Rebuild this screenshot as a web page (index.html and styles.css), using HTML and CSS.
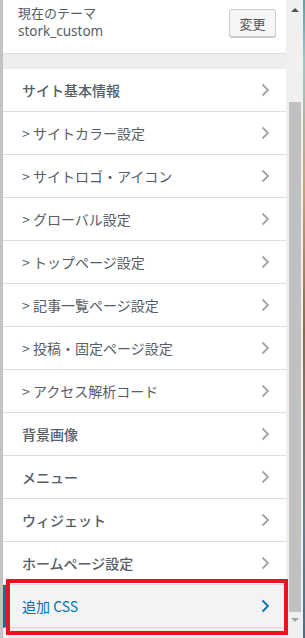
FILE: index.html
```html
<!DOCTYPE html>
<html lang="ja">
<head>
    <meta charset="UTF-8">
    <meta name="viewport" content="width=device-width, initial-scale=1.0">
    <title>カスタマイズ</title>
    <link rel="stylesheet" href="styles.css">
</head>
<body>
    <div class="frame">
        <div class="edge"></div>

        <div class="panel">
            <div class="theme-info">
                <div class="theme-text">
                    <span class="theme-label">現在のテーマ</span>
                    <span class="theme-name">stork_custom</span>
                </div>
                <button class="change-btn">変更</button>
            </div>

            <ul class="sections">
                <li class="section main">サイト基本情報</li>
                <li class="section">&gt; サイトカラー設定</li>
                <li class="section">&gt; サイトロゴ・アイコン</li>
                <li class="section">&gt; グローバル設定</li>
                <li class="section">&gt; トップページ設定</li>
                <li class="section">&gt; 記事一覧ページ設定</li>
                <li class="section">&gt; 投稿・固定ページ設定</li>
                <li class="section">&gt; アクセス解析コード</li>
                <li class="section main">背景画像</li>
                <li class="section main">メニュー</li>
                <li class="section main">ウィジェット</li>
                <li class="section main">ホームページ設定</li>
                <li class="section main active">追加 CSS</li>
            </ul>
        </div>

        <div class="scrollbar">
            <span class="arrow up"></span>
            <div class="thumb"></div>
            <span class="arrow down"></span>
        </div>

        <div class="backdrop"></div>

        <!-- highlight box around the last section -->
        <div class="highlight"></div>
    </div>

    <script>
        // add the chevron to every section row
        document.querySelectorAll(".section").forEach(function (row) {
            const chevron = document.createElementNS("http://www.w3.org/2000/svg", "svg");
            chevron.setAttribute("class", "chevron");
            chevron.setAttribute("viewBox", "0 0 9 14");
            chevron.innerHTML = '<polyline points="1.5,1.5 7,7 1.5,12.5" fill="none" stroke="currentColor" stroke-width="1.8"/>';
            row.appendChild(chevron);
        });
    </script>
</body>
</html>
```

FILE: styles.css
```css
body {
    margin: 0;
    padding: 0;
    font-family: "Noto Sans", "Noto Sans CJK JP", sans-serif;
    background-color: #eeeeee;
}

.frame {
    position: relative;
    display: flex;
    width: 305px;
    height: 638px;
    overflow: hidden;
}

.edge {
    width: 3px;
    background-color: #c3c3c3;
}

.panel {
    width: 283px;
    background-color: #eeeeee;
}

.theme-info {
    display: flex;
    justify-content: space-between;
    align-items: flex-start;
    height: 54px;
    padding: 5px 10px 0 15px;
    box-sizing: border-box;
    background-color: #ffffff;
    border-bottom: 1px solid #dddddd;
}

.theme-text {
    display: flex;
    flex-direction: column;
    font-size: 13px;
    line-height: 17px;
    color: #555d66;
}

.theme-name {
    margin-top: 1px;
    font-size: 13.5px;
}

.change-btn {
    margin-top: 4px;
    width: 47px;
    height: 28px;
    padding: 0;
    font-family: "Noto Sans CJK JP", sans-serif;
    font-size: 13px;
    color: #555555;
    background-color: #f7f7f7;
    border: 1px solid #cccccc;
    border-radius: 3px;
    box-shadow: 0 1px 0 #cccccc;
}

.sections {
    list-style: none;
    margin: 15px 0 0 0;
    padding: 0;
}

.section {
    display: flex;
    justify-content: space-between;
    align-items: center;
    height: 42px;
    padding: 0 16px 0 19px;
    background-color: #ffffff;
    border-bottom: 1px solid #dddddd;
    font-family: "Noto Sans CJK JP", sans-serif;
    font-size: 14px;
    color: #555d66;
}

.section.main {
    font-weight: 500;
}

.chevron {
    width: 9px;
    height: 14px;
    color: #a0a5aa;
}

.section.active {
    background-color: #f3f3f5;
    color: #0073aa;
    border-left: 3px solid #0073aa;
    padding-left: 16px;
    font-weight: 400;
}

.section.active .chevron {
    color: #0073aa;
}

.scrollbar {
    display: flex;
    flex-direction: column;
    align-items: center;
    width: 17px;
    background-color: #f0f0f0;
}

.arrow {
    width: 0;
    height: 0;
    border-left: 4px solid transparent;
    border-right: 4px solid transparent;
}

.arrow.up {
    margin-top: 8px;
    border-bottom: 4px solid #505050;
}

.arrow.down {
    margin-top: 6px;
    border-top: 4px solid #a3a3a3;
}

.thumb {
    width: 12px;
    height: 510px;
    margin-top: 90px;
    background-color: #c1c1c1;
}

.backdrop {
    width: 2px;
    background: linear-gradient(#5f9fa0 0, #9cc6c4 60px, #c8a27a 190px, #8a6b4e 330px, #6c7f86 520px, #4b6f80 638px);
}

.highlight {
    position: absolute;
    left: 6px;
    top: 579px;
    width: 282px;
    height: 56px;
    box-sizing: border-box;
    border: 4px solid #e5161f;
}
```
